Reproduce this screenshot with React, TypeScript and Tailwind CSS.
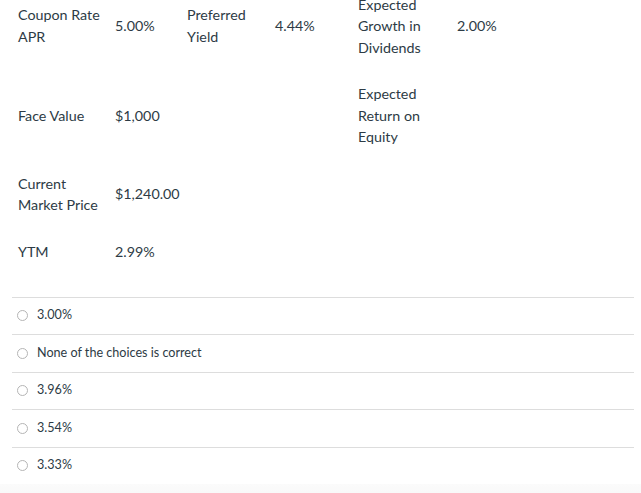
import React from "react";

const rows: { cells: React.ReactNode[] }[] = [
  {
    cells: [
      <>Coupon Rate<br />APR</>,
      <>5.00%</>,
      <>Preferred<br />Yield</>,
      <>4.44%</>,
      <>Expected<br />Growth in<br />Dividends</>,
      <>2.00%</>,
    ],
  },
  {
    cells: [
      <>Face Value</>,
      <>$1,000</>,
      <></>,
      <></>,
      <>Expected<br />Return on<br />Equity</>,
      <></>,
    ],
  },
  {
    cells: [
      <>Current<br />Market Price</>,
      <>$1,240.00</>,
      <></>,
      <></>,
      <></>,
      <></>,
    ],
  },
  {
    cells: [<>YTM</>, <>2.99%</>, <></>, <></>, <></>, <></>],
  },
];

const answers = ["3.00%", "None of the choices is correct", "3.96%", "3.54%", "3.33%"];

export default function App() {
  return (
    <div
      className="w-[641px] h-[493px] overflow-hidden bg-white text-[#2d3b45]"
      style={{ fontFamily: "Lato, 'Open Sans', sans-serif" }}
    >
      <div className="mt-[-19px] pl-[18px] text-[14.3px] leading-[21.5px]">
        {rows.map((r, i) => (
          <div key={i} className="grid grid-cols-[97px_72px_88px_83px_99px_1fr] items-center py-[12.5px]">
            {r.cells.map((c, j) => (
              <div key={j}>{c}</div>
            ))}
          </div>
        ))}
      </div>
      <div className="mt-[22px] ml-[12px] mr-[7px]">
        {answers.map((a) => (
          <div key={a} className="h-[37.5px] border-t border-[#dddddd] flex items-center pl-[5px]">
            <span className="w-[11px] h-[11px] rounded-full border border-[#b5b5b5] bg-white shrink-0" />
            <span className="ml-[9px] text-[12.6px] text-[#2d3b45]">{a}</span>
          </div>
        ))}
      </div>
      <div className="h-[30px] bg-gradient-to-b from-[#fbfbfb] to-[#f4f4f4]" />
    </div>
  );
}
